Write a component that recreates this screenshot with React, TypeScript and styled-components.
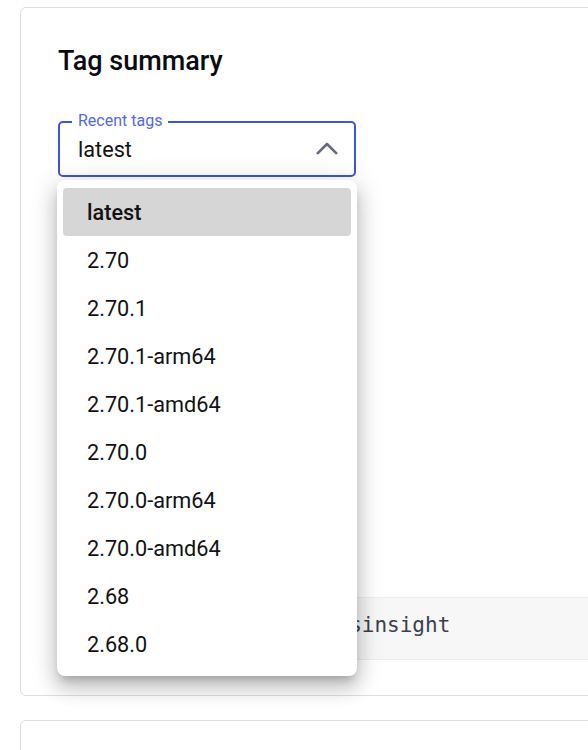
import React, { FunctionComponent } from "react";
import styled, { createGlobalStyle } from "styled-components";

const GlobalStyle = createGlobalStyle`
  html, body {
    margin: 0;
    padding: 0;
    background: #ffffff;
    overflow: hidden;
    font-family: Roboto, "Noto Sans", Arial, sans-serif;
    color: #111111;
  }
`;

const Page = styled.div`
  width: 960px;
  padding: 7px 0 0 20px;
  display: flex;
  flex-direction: column;
  gap: 24px;
`;

const Card = styled.section<{ $tall?: boolean }>`
  border: 1px solid #dedee3;
  border-radius: 6px;
  background: #ffffff;
  padding: 36px 38px 35px 37px;
  min-height: ${(p) => (p.$tall ? "120px" : "auto")};
`;

const Title = styled.h2`
  margin: 0;
  font-size: 27px;
  line-height: 35px;
  font-weight: 500;
  color: #0b0b0f;
`;

const SelectField = styled.div`
  position: relative;
  width: 298px;
  height: 56px;
  margin-top: 42px;
  box-sizing: border-box;
  border: 2px solid #3f54dc;
  border-radius: 5px;
  display: flex;
  align-items: center;
  justify-content: space-between;
  padding: 0 16px 0 18px;
`;

const FieldLabel = styled.span`
  position: absolute;
  top: -11px;
  left: 12px;
  padding: 0 6px;
  background: #ffffff;
  font-size: 16px;
  line-height: 18px;
  color: #5468e2;
`;

const SelectValue = styled.span`
  font-size: 21.7px;
  line-height: 24px;
  color: #111111;
  padding-top: 2px;
`;

const Chevron = styled.svg`
  width: 22px;
  height: 13px;
  color: #656a7c;
  margin-top: -2px;
`;

const Menu = styled.ul`
  position: absolute;
  z-index: 10;
  top: calc(100% + 5px);
  left: -3px;
  width: 300px;
  box-sizing: border-box;
  margin: 0;
  padding: 8px 6px;
  list-style: none;
  background: #ffffff;
  border-radius: 8px;
  box-shadow: 0 7px 8px -4px rgba(0, 0, 0, 0.2),
    0 12px 18px 2px rgba(0, 0, 0, 0.14), 0 5px 26px 4px rgba(0, 0, 0, 0.12);
`;

const MenuItem = styled.li<{ $selected?: boolean }>`
  height: 48px;
  display: flex;
  align-items: center;
  padding-left: 24px;
  border-radius: 4px;
  font-size: 21.7px;
  font-weight: ${(p) => (p.$selected ? 500 : 400)};
  color: #121212;
  background: ${(p) => (p.$selected ? "#d6d6d6" : "transparent")};
`;

const CodeBlock = styled.pre`
  margin: 420px 0 0 0;
  height: 63px;
  box-sizing: border-box;
  display: flex;
  align-items: center;
  padding: 0 16px 7px 13px;
  background: #f7f7f7;
  border-top: 1px solid #eeeeee;
  border-bottom: 1px solid #eeeeee;
  font-family: "DejaVu Sans Mono", "Liberation Mono", monospace;
  font-size: 21px;
  color: #3b3f4d;
`;

const tags = [
  "latest",
  "2.70",
  "2.70.1",
  "2.70.1-arm64",
  "2.70.1-amd64",
  "2.70.0",
  "2.70.0-arm64",
  "2.70.0-amd64",
  "2.68",
  "2.68.0",
];

const TagSelect: FunctionComponent<{ value: string }> = ({ value }) => {
  return (
    <SelectField>
      <FieldLabel>Recent tags</FieldLabel>
      <SelectValue>{value}</SelectValue>
      <Chevron viewBox="0 0 22 13" fill="none">
        <polyline
          points="1.8,11.2 11,2 20.2,11.2"
          stroke="currentColor"
          strokeWidth="2.6"
          strokeLinecap="round"
          strokeLinejoin="round"
        />
      </Chevron>
      <Menu>
        {tags.map((tag) => (
          <MenuItem key={tag} $selected={tag === value}>
            {tag}
          </MenuItem>
        ))}
      </Menu>
    </SelectField>
  );
};

const App: FunctionComponent = () => {
  return (
    <>
      <GlobalStyle />
      <Page>
        <Card>
          <Title>Tag summary</Title>
          <TagSelect value="latest" />
          <CodeBlock>docker pull redis/redisinsight</CodeBlock>
        </Card>
        <Card $tall />
      </Page>
    </>
  );
};

export default App;
